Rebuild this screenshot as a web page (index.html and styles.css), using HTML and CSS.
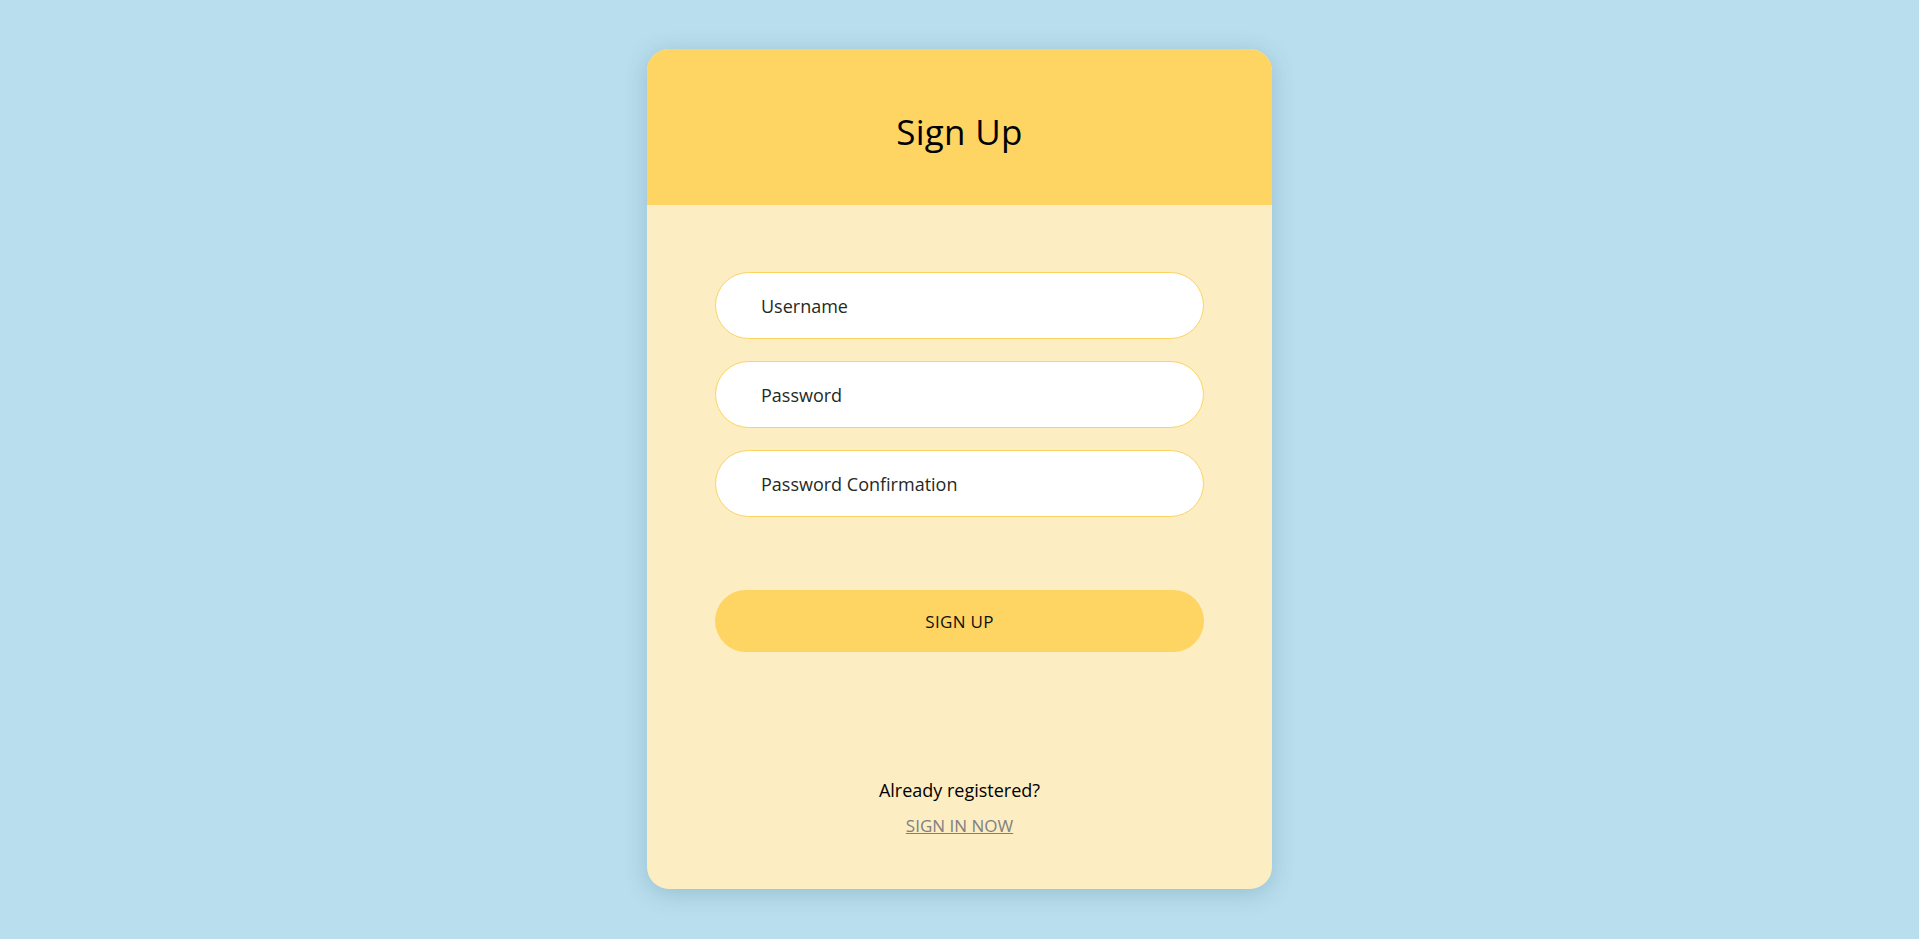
FILE: index.html
```html
<!DOCTYPE html>
<html lang="en">
<head>
<meta charset="utf-8">
<title>Sign Up</title>
<link rel="stylesheet" href="styles.css">
</head>
<body>
<div class="card">
  <div class="card-header">
    <h1 class="title">Sign Up</h1>
  </div>
  <form class="card-body">
    <div class="fields">
      <input class="field" type="text" placeholder="Username">
      <input class="field" type="password" placeholder="Password">
      <input class="field" type="password" placeholder="Password Confirmation">
    </div>
    <button class="submit" type="button">SIGN UP</button>
    <div class="footer">
      <p class="already">Already registered?</p>
      <a class="signin" href="#">SIGN IN NOW</a>
    </div>
  </form>
</div>
</body>
</html>
```

FILE: styles.css
```css
* { box-sizing: border-box; }
html, body { margin: 0; padding: 0; }
body {
  background: #b9deed;
  min-height: 939px;
  font-family: "Open Sans", "Noto Sans", sans-serif;
  padding-top: 49px;
}
.card {
  width: 625px;
  height: 840px;
  margin: 0 auto;
  border-radius: 22px;
  overflow: hidden;
  background: #fdedc2;
  box-shadow: 0 4px 22px rgba(60, 110, 140, 0.28);
  display: flex;
  flex-direction: column;
}
.card-header {
  height: 156px;
  background: #fed563;
  display: flex;
  align-items: center;
  justify-content: center;
  padding-top: 8px;
}
.title {
  margin: 0;
  font-weight: 400;
  font-size: 35px;
  color: #000;
  letter-spacing: 0.3px;
}
.card-body {
  flex: 1;
  padding: 67px 68px 0;
  display: flex;
  flex-direction: column;
}
.fields {
  display: flex;
  flex-direction: column;
  gap: 22px;
}
.field {
  height: 67px;
  border: 1.5px solid #fdd35f;
  border-radius: 34px;
  background: #fff;
  padding: 0 20px 0 45px;
  font-family: inherit;
  font-size: 18px;
  color: #1f2a24;
  outline: none;
}
.field::placeholder { color: #1f2a24; opacity: 1; }
.submit {
  margin-top: 73px;
  height: 62px;
  border: none;
  border-radius: 31px;
  background: #fed563;
  font-family: inherit;
  font-size: 17px;
  color: #111;
  letter-spacing: 0.3px;
  cursor: pointer;
}
.footer {
  margin-top: 126px;
  display: flex;
  flex-direction: column;
  align-items: center;
}
.already {
  margin: 0;
  font-size: 18px;
  color: #000;
  line-height: 24px;
}
.signin {
  margin-top: 13px;
  font-size: 17px;
  color: #808080;
  line-height: 22px;
}
```
